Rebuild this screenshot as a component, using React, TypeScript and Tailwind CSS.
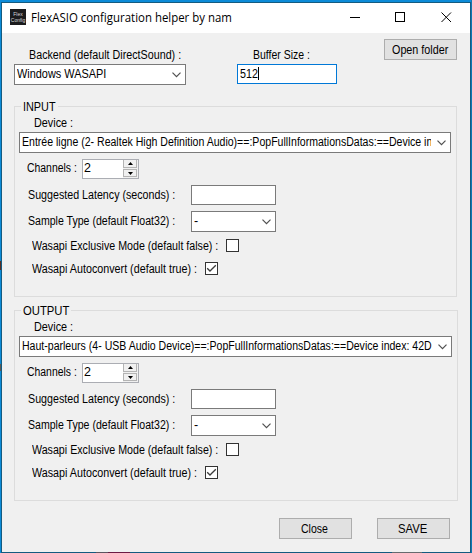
import { useLayoutEffect, useRef, useState } from "react";

/** Single line of text condensed horizontally to a given width. */
function Label({ text, width, className = "" }: { text: string; width: number; className?: string }) {
  const ref = useRef<HTMLSpanElement>(null);
  const [scale, setScale] = useState(1);
  useLayoutEffect(() => {
    if (ref.current) setScale(width / ref.current.offsetWidth);
  }, [text, width]);
  return (
    <span className={`block h-4 shrink-0 whitespace-pre leading-4 ${className}`} style={{ width }}>
      <span ref={ref} className="inline-block origin-left" style={{ transform: `scaleX(${scale})` }}>
        {text}
      </span>
    </span>
  );
}

function Chevron() {
  return (
    <svg className="mt-[7px] mr-[4px] shrink-0" width="9" height="6" viewBox="0 0 9 6" fill="none" stroke="#505050" strokeWidth="1.2">
      <path d="M0.5 0.7 L4.5 4.7 L8.5 0.7" />
    </svg>
  );
}

function Select({ text, textWidth, className }: { text: string; textWidth: number; className: string }) {
  return (
    <div className={`flex h-[21px] shrink-0 items-start border border-[#7a7a7a] bg-white pl-[2px] ${className}`}>
      <div className="mt-[1px] mr-[6px] min-w-0 flex-1 overflow-hidden">
        <Label text={text} width={textWidth} />
      </div>
      <Chevron />
    </div>
  );
}

function Checkbox({ checked = false }: { checked?: boolean }) {
  return (
    <div className="h-[13px] w-[13px] shrink-0 border border-[#333] bg-white">
      {checked && (
        <svg width="11" height="11" viewBox="0 0 11 11" fill="none" stroke="#3c3c3c" strokeWidth="1.3">
          <path d="M1.2 5.2 L4 8 L9.8 2.2" />
        </svg>
      )}
    </div>
  );
}

function Spinner() {
  return (
    <div className="ml-[5px] flex h-5 w-[57px] border border-[#abadb3] bg-white pl-[1px]">
      <Label text="2" width={7} className="flex-1" />
      <div className="flex w-[15px] flex-col gap-px bg-[#f0f0f0] pr-px">
        <div className="flex h-[8px] items-center justify-center border border-t-0 border-[#b4b4b4] bg-[#f0f0f0]">
          <svg width="5" height="3" viewBox="0 0 5 3">
            <path d="M0 3 L2.5 0 L5 3 Z" fill="#000" />
          </svg>
        </div>
        <div className="flex h-[8px] items-center justify-center border border-[#b4b4b4] bg-[#f0f0f0]">
          <svg width="5" height="3" viewBox="0 0 5 3">
            <path d="M0 0 L2.5 3 L5 0 Z" fill="#000" />
          </svg>
        </div>
      </div>
    </div>
  );
}

function Button({ text, textWidth }: { text: string; textWidth: number }) {
  return (
    <button className="flex h-[21px] w-[73px] shrink-0 justify-center border border-[#adadad] bg-[#e1e1e1] pt-[2px] pr-[2px] text-left">
      <Label text={text} width={textWidth} />
    </button>
  );
}

type GroupProps = {
  title: string;
  titleWidth: number;
  device: string;
  deviceWidth: number;
  wide?: boolean;
};

function Group({ title, titleWidth, device, deviceWidth, wide = false }: GroupProps) {
  return (
    <section className={`relative ml-3 h-[191px] shrink-0 border border-[#dcdcdc] pt-2 ${wide ? "w-[444px]" : "w-[443px]"}`}>
      <div className="absolute -top-[8px] left-[6px] bg-[#f0f0f0] px-[2px]">
        <Label text={title} width={titleWidth} />
      </div>
      <Label text="Device :" width={39} className="ml-[19px]" />
      <Select text={device} textWidth={deviceWidth} className={`mt-px ml-1 ${wide ? "w-[433px]" : "w-[432px]"}`} />
      <div className="mt-[6px] ml-[12px] flex h-5">
        <Label text="Channels :" width={50} className="mt-px" />
        <Spinner />
      </div>
      <div className="mt-[6px] ml-[13px] flex h-5">
        <Label text="Suggested Latency (seconds) :" width={147} className="mt-[2px]" />
        <div className="ml-[16px] w-[85px] border border-[#7a7a7a] bg-white" />
      </div>
      <div className="mt-[6px] ml-[13px] flex h-[21px]">
        <Label text="Sample Type (default Float32) :" width={147} className="mt-[2px]" />
        <Select text="-" textWidth={4} className="ml-[16px] w-[85px]" />
      </div>
      <div className="mt-[7px] ml-[17px] flex h-[13px]">
        <Label text="Wasapi Exclusive Mode (default false) :" width={186} className="-mt-px" />
        <div className="ml-[8px]">
          <Checkbox />
        </div>
      </div>
      <div className="mt-[10px] ml-[17px] flex h-[13px]">
        <Label text="Wasapi Autoconvert (default true) :" width={165} className="-mt-px" />
        <div className="ml-[8px]">
          <Checkbox checked />
        </div>
      </div>
    </section>
  );
}

/** Slivers of desktop shortcuts visible around the window. */
function DesktopEdges() {
  return (
    <>
      <div className="absolute top-[261px] left-0 h-[9px] w-px bg-[#5a2f24]" />
      <div className="absolute top-[364px] left-0 h-[7px] w-px bg-[#5c5a55]" />
      <div className="absolute top-[61px] -right-px h-[6px] w-px bg-[#08182c]" />
      <div className="absolute top-[162px] -right-px h-[8px] w-px border-y border-[#6d7b86] bg-[#10334c]" />
      <div className="absolute bottom-0 left-[96px] h-px w-[12px] bg-[#5b5560]" />
      <div className="absolute bottom-0 left-[108px] h-px w-[22px] bg-[#6b1c44]" />
      <div className="absolute bottom-0 left-[392px] h-px w-[30px] bg-[#666a6e]" />
    </>
  );
}

export default function App() {
  return (
    <div className="relative h-[553px] w-[472px] overflow-hidden border-r border-[#0f78b4] bg-[#0c8bd8] pt-[2px] pl-px font-['Liberation_Sans',sans-serif] text-[12.5px] text-black">
      <div className="flex h-[551px] flex-col border border-[#145b80] bg-[#f0f0f0]">
        <header className="flex h-[30px] shrink-0 items-start bg-white pl-2">
          <div className="mt-[6px] flex h-4 w-4 flex-col items-center justify-center bg-[#1b1b1d] text-[5px] leading-[6px] text-[#d8d8d8]">
            <span>Flex</span>
            <span>Config</span>
          </div>
          <Label text="FlexASIO configuration helper by nam" width={201} className="mt-[7px] ml-[5px] font-['Open_Sans',sans-serif] text-[12px]" />
          <svg className="ml-auto mt-[9px] mr-[18px]" width="102" height="11" viewBox="0 0 102 11" fill="none" stroke="#000">
            <path d="M0 5.5 H10" />
            <rect x="45.5" y="0.5" width="9" height="9" />
            <path d="M91.5 0.5 L101 10 M101 0.5 L91.5 10" />
          </svg>
        </header>
        <div className="flex h-[73px] shrink-0 pl-3">
          <div className="w-[172px] pt-[14px]">
            <Label text="Backend (default DirectSound) :" width={152} className="ml-[15px]" />
            <Select text="Windows WASAPI" textWidth={89} className="mt-px w-[172px]" />
          </div>
          <div className="ml-[51px] w-[100px] pt-[14px]">
            <Label text="Buffer Size :" width={57} className="ml-[16px]" />
            <div className="mt-px flex h-5 border border-[#0078d7] bg-white pl-[2px]">
              <Label text="512" width={18} className="mt-px" />
              <span className="mt-[2px] h-[13px] w-px bg-black" />
            </div>
          </div>
          <div className="ml-[47px] pt-[6px]">
            <Button text="Open folder" textWidth={56} />
          </div>
        </div>
        <Group
          title="INPUT"
          titleWidth={33}
          device="Entrée ligne (2- Realtek High Definition Audio)==:PopFullInformationsDatas:==Device in"
          deviceWidth={410}
        />
        <div className="h-[13px] shrink-0" />
        <Group
          title="OUTPUT"
          titleWidth={46}
          device="Haut-parleurs (4- USB Audio Device)==:PopFullInformationsDatas:==Device index: 42D"
          deviceWidth={410}
          wide
        />
        <footer className="mt-[17px] ml-[277px] flex gap-[25px]">
          <Button text="Close" textWidth={27} />
          <Button text="SAVE" textWidth={29} />
        </footer>
      </div>
      <DesktopEdges />
    </div>
  );
}
